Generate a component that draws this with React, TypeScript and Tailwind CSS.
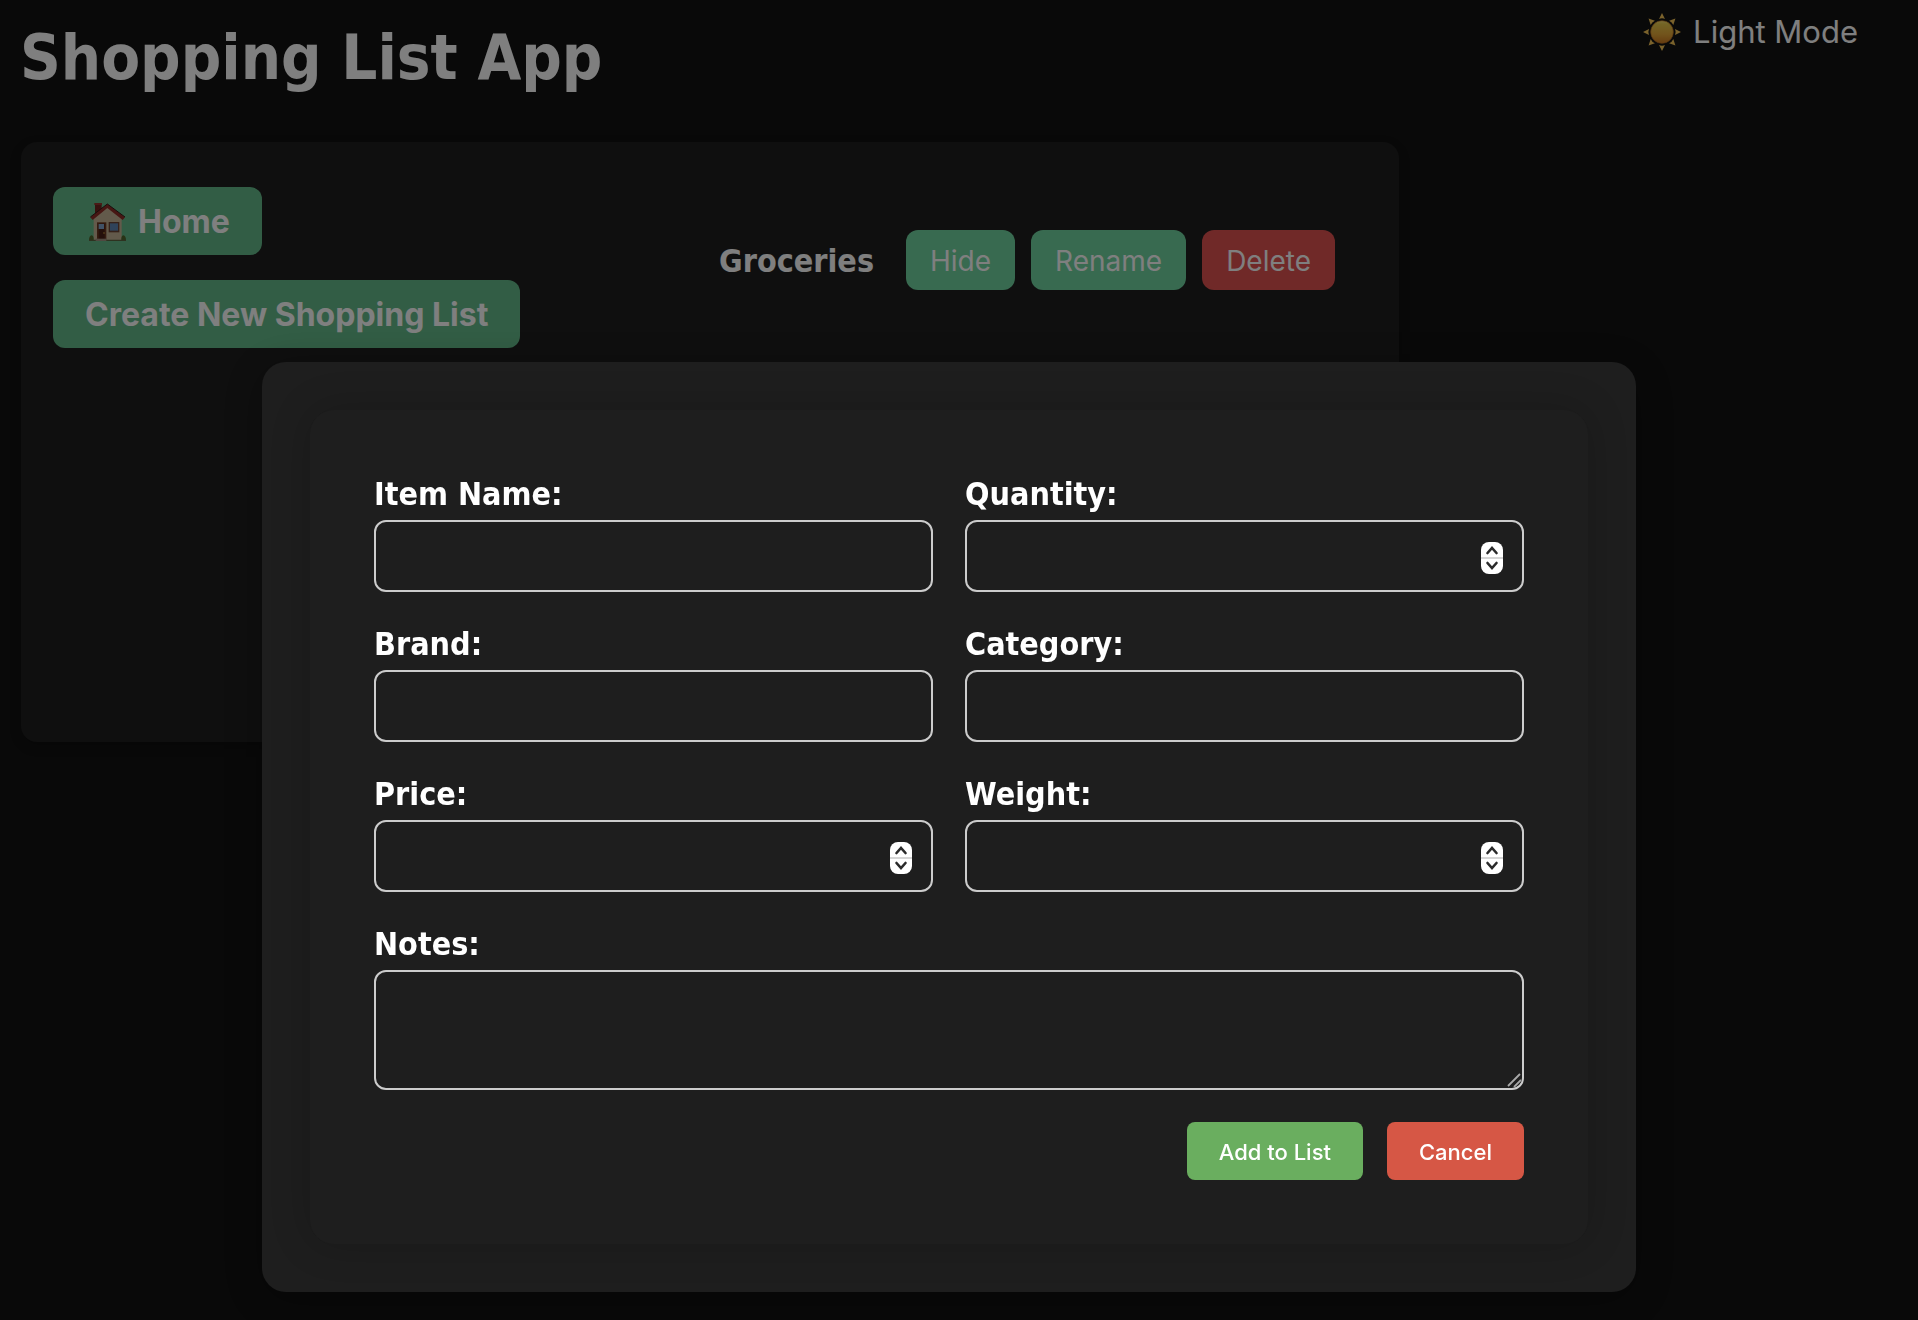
import React from "react";

function SunIcon() {
  const rays = [0, 45, 90, 135, 180, 225, 270, 315];
  return (
    <svg width="38" height="38" viewBox="0 0 114 114" aria-hidden="true">
      <defs>
        <linearGradient id="sun-disc" x1="0" y1="0" x2="0" y2="1">
          <stop offset="0" stopColor="#f6de70" />
          <stop offset="0.15" stopColor="#e8c84a" />
          <stop offset="0.6" stopColor="#e4a838" />
          <stop offset="1" stopColor="#cc7820" />
        </linearGradient>
      </defs>
      <circle cx="57" cy="57" r="34" fill="url(#sun-disc)" stroke="#b86c20" strokeWidth="2" />
      {rays.map((angle) => (
        <path key={angle} d="M57 0 L66 18 Q57 14 48 18 Z" fill="#f4c458" transform={`rotate(${angle} 57 57)`} />
      ))}
    </svg>
  );
}

function HouseIcon() {
  return (
    <svg className="ml-1" width="37" height="38" viewBox="0 0 111 114" aria-hidden="true">
      <path d="M18 2h20v24L18 40Z" fill="#6e241e" />
      <rect x="16" y="0" width="23" height="6" fill="#97352c" />
      <path d="M14 42 L55 10 L98 42 V112 H14 Z" fill="#c6b496" />
      <path d="M55 3 L108 43 L101 51 L55 15 L11 51 L4 43 Z" fill="#8e2c26" />
      <path d="M4 42 L55 3 L108 42" fill="none" stroke="#341b18" strokeWidth="3" />
      <rect x="24" y="58" width="28" height="52" fill="#6d3822" />
      <rect x="29" y="62" width="18" height="46" fill="#4a2117" />
      <rect x="29" y="63" width="16" height="15" fill="#82a5cc" />
      <circle cx="45" cy="90" r="2.5" fill="#d0a040" />
      <rect x="59" y="57" width="32" height="31" fill="#6d4434" />
      <rect x="63" y="61" width="24" height="22" fill="#5e86b4" />
      <path d="M0 112q0-14 8-15q7 1 6 15Z M97 112q-1-14 6-15q8 1 8 15Z" fill="#50662c" />
      <path d="M0 110h111v4H0Z" fill="#5c6440" />
      <path d="M20 107h32v7H20Z" fill="#a09080" />
    </svg>
  );
}

function Spinner() {
  return (
    <svg
      className="pointer-events-none absolute top-[22px] right-[21px]"
      width="22"
      height="32"
      viewBox="0 0 22 32"
      aria-hidden="true"
    >
      <rect width="22" height="32" rx="8" fill="#ffffff" />
      <rect y="15" width="22" height="2" fill="#d6d6d6" />
      <path
        d="M6.5 11 L11 6 L15.5 11 M6.5 21 L11 26 L15.5 21"
        fill="none"
        stroke="#2a2a2a"
        strokeWidth="2.6"
        strokeLinecap="round"
      />
    </svg>
  );
}

const labelClass =
  "pt-0.5 font-['DejaVu_Sans_Condensed','DejaVu_Sans',sans-serif] text-[32px] leading-[36px] font-bold text-white";

function Field({ id, label, type = "text" }: { id: string; label: string; type?: "text" | "number" }) {
  return (
    <div className="flex flex-col gap-2">
      <label htmlFor={id} className={labelClass}>
        {label}
      </label>
      <div className="relative">
        <input
          id={id}
          type={type}
          className="block h-[72px] w-full rounded-xl border-2 border-[#cccccc] bg-[#1e1e1e] px-5 text-[28px] text-white outline-none [appearance:textfield] [&::-webkit-inner-spin-button]:appearance-none"
        />
        {type === "number" && <Spinner />}
      </div>
    </div>
  );
}

function Dialog() {
  return (
    <div className="fixed inset-0 overflow-hidden bg-black/50 pt-[362px] pr-5">
      <div
        role="dialog"
        aria-modal="true"
        aria-label="Add item"
        className="mx-auto w-full max-w-[1374px] rounded-3xl bg-[#1e1e1e] p-12 shadow-[0_8px_40px_rgba(0,0,0,0.3)]"
      >
        <form className="flex flex-col gap-8 rounded-3xl bg-[#1e1e1e] p-16 shadow-[0_0_40px_rgba(0,0,0,0.2)]">
          <div className="grid grid-cols-2 gap-8">
            <Field id="item-name" label="Item Name:" />
            <Field id="quantity" label="Quantity:" type="number" />
            <Field id="brand" label="Brand:" />
            <Field id="category" label="Category:" />
            <Field id="price" label="Price:" type="number" />
            <Field id="weight" label="Weight:" type="number" />
          </div>
          <div className="flex flex-col gap-2">
            <label htmlFor="notes" className={labelClass}>
              Notes:
            </label>
            <div className="relative">
              <textarea
                id="notes"
                className="block h-[120px] w-full resize-none rounded-xl border-2 border-[#cccccc] bg-[#1e1e1e] px-5 py-4 text-[28px] text-white outline-none"
              />
              <svg
                className="pointer-events-none absolute right-[3px] bottom-[3px]"
                width="14"
                height="14"
                viewBox="0 0 14 14"
                aria-hidden="true"
              >
                <path d="M1 13 L13 1 M7 14 L14 7" stroke="#a8a8a8" strokeWidth="1.8" />
              </svg>
            </div>
          </div>
          <div className="flex justify-end gap-6 font-['Inter',sans-serif] text-[22px] font-medium text-white">
            <button type="submit" className="h-[58px] rounded-lg bg-[#6aae5f] px-8 pt-0.5">
              Add to List
            </button>
            <button type="button" className="h-[58px] rounded-lg bg-[#d65745] px-8 pt-0.5">
              Cancel
            </button>
          </div>
        </form>
      </div>
    </div>
  );
}

export default function App() {
  return (
    <div className="min-h-screen bg-[#121212] font-['DejaVu_Sans_Condensed','DejaVu_Sans',sans-serif] text-white">
      <header className="flex items-start justify-between pr-[60px] pl-5">
        <h1 className="pt-[22px] pb-12 text-[63px] leading-[72px] font-bold">Shopping List App</h1>
        <button type="button" className="flex h-16 items-center gap-3 font-['Inter',sans-serif] text-[31px]">
          <SunIcon />
          Light Mode
        </button>
      </header>
      <main className="ml-[21px] flex min-h-[600px] max-w-[1378px] items-start justify-between rounded-2xl bg-[#1e1e1e] pt-[45px] pr-16 pl-8 shadow-[0_4px_12px_rgba(0,0,0,0.2)]">
        <nav className="flex flex-col items-start gap-[25px] font-['Inter',sans-serif] text-[32px] font-bold">
          <button type="button" className="flex h-[68px] items-center gap-3 rounded-xl bg-[#64ba8a] px-8 pt-0.5">
            <HouseIcon />
            Home
          </button>
          <button type="button" className="h-[68px] rounded-xl bg-[#64ba8a] px-8 pt-0.5">
            Create New Shopping List
          </button>
        </nav>
        <section className="flex items-center gap-4 pt-[43px] font-['Inter',sans-serif] text-[28px]">
          <h2 className="mr-4 pt-0.5 font-['DejaVu_Sans_Condensed','DejaVu_Sans',sans-serif] text-[32px] font-bold">
            Groceries
          </h2>
          <button type="button" className="h-[60px] rounded-xl bg-[#70d4a0] px-6 pt-0.5">
            Hide
          </button>
          <button type="button" className="h-[60px] rounded-xl bg-[#70d4a0] px-6 pt-0.5">
            Rename
          </button>
          <button type="button" className="h-[60px] rounded-xl bg-[#e05250] px-6 pt-0.5">
            Delete
          </button>
        </section>
      </main>
      <Dialog />
    </div>
  );
}
